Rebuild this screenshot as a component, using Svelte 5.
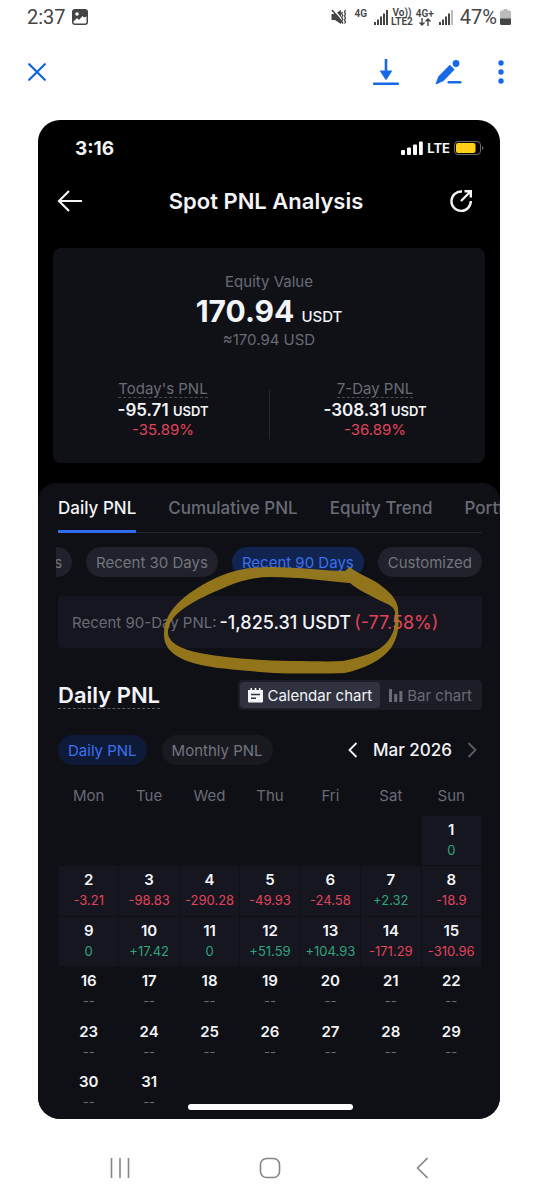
<script>
    const tabs = ['Daily PNL', 'Cumulative PNL', 'Equity Trend', 'Portfolio'];
    const ranges = ['Recent 7 Days', 'Recent 30 Days', 'Recent 90 Days', 'Customized'];
    const weekdays = ['Mon', 'Tue', 'Wed', 'Thu', 'Fri', 'Sat', 'Sun'];
    const results = ['0', '-3.21', '-98.83', '-290.28', '-49.93', '-24.58', '+2.32', '-18.9',
        '0', '+17.42', '0', '+51.59', '+104.93', '-171.29', '-310.96'];

    let activeTab = 'Daily PNL';
    let activeRange = 'Recent 90 Days';
    let chart = 'calendar';
    let period = 'daily';

    // March 2026 starts on a Sunday
    const offset = 6;
    const daysInMonth = 31;
    const weeks = [];
    for (let start = 0; start < offset + daysInMonth; start += 7) {
        const week = [];
        for (let i = start; i < start + 7; i++) {
            const day = i - offset + 1;
            week.push(day < 1 || day > daysInMonth ? null : { day, pnl: results[day - 1] });
        }
        weeks.push(week);
    }

    function tone(pnl) {
        if (!pnl) return 'none';
        return pnl.startsWith('-') ? 'loss' : 'gain';
    }
</script>

<div class="viewer">
    <div class="phone-status">
        <span class="clock">2:37</span>
        <svg width="16" height="16" viewBox="0 0 16 16">
            <rect x="0" y="0" width="16" height="16" rx="3" fill="#444" />
            <circle cx="5" cy="5" r="1.8" fill="#fff" />
            <path d="M1.500 12.500 5 9l2 2 3.500-4 1.500 1.500 2.500-1V13a1.500 1.500 0 0 1-1.500 1.500H3A1.500 1.500 0 0 1 1.500 13z" fill="#fff" />
        </svg>
        <span class="spacer"></span>
        <svg width="16" height="16" viewBox="0 0 16 16">
            <path d="M0.500 5h3.500L10 1v14L4 11H0.500z" fill="#444" />
            <path d="M2.500 0.500l11 13" stroke="#fff" stroke-width="1.400" />
            <path d="M1 1l11 13.500" stroke="#444" stroke-width="1.600" />
            <path d="M11.500 3l-0.800 1.500 1 2-1 2 1 2-1 2M14.500 1l-1 2 1 2-1 2 1 2-1 2 1 2-1 1.500" stroke="#444" stroke-width="1.300" fill="none" />
        </svg>
        <span class="net">4G</span>
        <svg class="bars" width="14" height="15" viewBox="0 0 14 15" fill="#444">
            <path d="M0 12h2v3H0zM3 9.500h2V15H3zM6 6.500h2V15H6zM9 3.500h2V15H9zM12 0h2v15h-2z" />
        </svg>
        <span class="net two">Vo))<br />LTE2</span>
        <span class="net two plus">4G+
            <svg width="12" height="8" viewBox="0 0 12 8" fill="none" stroke="#444" stroke-width="1.400">
                <path d="M3 0v7M0.500 4.500 3 7l2.500-2.500M9 8V1M6.500 3.500 9 1l2.500 2.500" />
            </svg>
        </span>
        <svg class="bars" width="14" height="15" viewBox="0 0 14 15" fill="#444">
            <path d="M0 12h2v3H0zM3 9.500h2V15H3zM6 6.500h2V15H6zM9 3.500h2V15H9z" />
            <path d="M12 0h2v15h-2z" fill="#bbb" />
        </svg>
        <span class="clock">47%</span>
        <svg width="11" height="16" viewBox="0 0 11 16">
            <path d="M3.500 0h4v1.500H9.500A1.500 1.500 0 0 1 11 3v7H0V3a1.500 1.500 0 0 1 1.500-1.500h2z" fill="#bbb" />
            <path d="M0 9.500h11v5a1.500 1.500 0 0 1-1.500 1.500h-8A1.500 1.500 0 0 1 0 14.500z" fill="#444" />
        </svg>
    </div>

    <div class="toolbar">
        <button aria-label="Close">
            <svg width="18" height="18" viewBox="0 0 18 18" fill="none" stroke="#1263dc" stroke-width="2.200" stroke-linecap="round">
                <path d="M1.200 1.200l15.600 15.600M16.800 1.200 1.200 16.800" />
            </svg>
        </button>
        <span class="spacer"></span>
        <button aria-label="Download">
            <svg width="26" height="28" viewBox="0 0 26 28" fill="#1768e6">
                <path d="M11.700 1h2.600v11.500h4.200q.8.200.3 1L13.600 21.500q-.6.600-1.200 0L7.200 13.500q-.5-.8.300-1h4.200z" />
                <rect x="0" y="24.500" width="26" height="2.600" rx="1" />
            </svg>
        </button>
        <button aria-label="Edit">
            <svg width="27" height="28" viewBox="0.500 0 27 28" fill="#1768e6">
                <circle cx="21.500" cy="5.500" r="3.400" />
                <path d="M15.300 6.800l4.800 4.800L9 23 2 26.200Q1 26.400 1.200 25.400L3.800 18.500z" />
                <rect x="13" y="23" width="14" height="2.600" rx="1.300" />
            </svg>
        </button>
        <button aria-label="More">
            <svg width="6" height="26" viewBox="0 0 6 26" fill="#1768e6">
                <circle cx="3" cy="4" r="2.700" />
                <circle cx="3" cy="13" r="2.700" />
                <circle cx="3" cy="22" r="2.700" />
            </svg>
        </button>
    </div>

    <main class="shot">
        <div class="ios-status">
            <span class="ios-time">3:16</span>
            <span class="spacer"></span>
            <svg width="22" height="14" viewBox="0 0 22 14" fill="#fff">
                <rect x="0" y="9" width="4" height="5" rx="1" />
                <rect x="6" y="6.500" width="4" height="7.500" rx="1" />
                <rect x="12" y="3.500" width="4" height="10.500" rx="1" />
                <rect x="18" y="0.500" width="3.800" height="13.500" rx="1" />
            </svg>
            <span class="lte">LTE</span>
            <svg width="30" height="14" viewBox="0 0 30 14">
                <rect x="0.500" y="0.500" width="26" height="13" rx="3.500" fill="none" stroke="#6d6a5c" />
                <rect x="2" y="2" width="19.500" height="10" rx="2" fill="#fdd017" />
                <path d="M28 5v4q1.500-.7 1.500-2T28 5z" fill="#666" />
            </svg>
        </div>

        <header>
            <button aria-label="Back">
                <svg width="26" height="22" viewBox="0 0 26 22" fill="none" stroke="#f3f4f8" stroke-width="2.200">
                    <path d="M12 1 2 11l10 10M2 11h23" />
                </svg>
            </button>
            <h1>Spot PNL Analysis</h1>
            <button aria-label="Share">
                <svg width="24" height="24" viewBox="0 0 24 24" fill="none" stroke="#f3f4f8" stroke-width="2.400">
                    <path d="M13 2.500A9.700 9.700 0 1 0 21.800 12" />
                    <path d="M12 12 21.500 2.500M15.500 2.300h6.300v6.300" />
                </svg>
            </button>
        </header>

        <section class="equity">
            <p class="muted">Equity Value</p>
            <p class="total">170.94 <small>USDT</small></p>
            <p class="muted">≈170.94 USD</p>
            <div class="split">
                <div>
                    <span class="muted hint">Today's PNL</span>
                    <strong>-95.71 <small>USDT</small></strong>
                    <span class="loss">-35.89%</span>
                </div>
                <div>
                    <span class="muted hint">7-Day PNL</span>
                    <strong>-308.31 <small>USDT</small></strong>
                    <span class="loss">-36.89%</span>
                </div>
            </div>
        </section>

        <section class="panel">
            <nav class="tabs">
                {#each tabs as tab}
                    <button class:active={tab === activeTab} on:click={() => (activeTab = tab)}>{tab}</button>
                {/each}
            </nav>

            <div class="marked">
                <div class="ranges">
                    {#each ranges as range}
                        <button class="chip" class:active={range === activeRange} on:click={() => (activeRange = range)}>{range}</button>
                    {/each}
                </div>
                <p class="summary">
                    <span>Recent 90-Day PNL:</span>
                    <b>-1,825.31 USDT</b>
                    <em>(-77.58%)</em>
                </p>
                <!-- highlighter loop drawn over the figures -->
                <svg class="loop" width="236" height="110" viewBox="164 565 236 110">
                    <path
                        fill="#a1801c"
                        fill-rule="evenodd"
                        d="M164 632C165 608 190 590 218 577C236 569 252 567 270 567C300 567 325 571 345 571L350 567C358 575 372 577 384 588C392 594 397 601 398 608C399 622 400 634 391 648C382 660 364 669 345 673C318 674 276 674 250 671C225 669 205 667 190 662C173 656 163 648 164 632Z
                        M168 631C167 642 180 649 200 653C225 658 255 660 290 661C310 661 328 662 343 661C362 657 380 652 388 641C396 630 395 624 395 612C393 604 385 604 375 598C366 593 358 590 350 583C325 581 300 577 270 577C255 577 240 581 228 586C205 596 169 610 168 631Z"
                    />
                </svg>
            </div>

            <div class="row chart-head">
                <h2>Daily PNL</h2>
                <div class="toggle">
                    <button class:active={chart === 'calendar'} on:click={() => (chart = 'calendar')}>
                        <svg width="15" height="15" viewBox="0 0 15 15">
                            <path d="M0 2h2.500V0H4v2h2.700V0h1.600v2H11V0h1.500v2H15v11.500a1 1 0 0 1-1 1H1a1 1 0 0 1-1-1z" fill="currentColor" />
                            <path d="M3 6.500h9M3 10.300h5" stroke="#30333f" stroke-width="1.500" />
                        </svg>
                        Calendar chart
                    </button>
                    <button class:active={chart === 'bar'} on:click={() => (chart = 'bar')}>
                        <svg width="15" height="15" viewBox="0 0 15 15" fill="currentColor">
                            <path d="M1 1h3v13H1zM6.200 6h3v8h-3zM11.400 3h3v11h-3z" />
                        </svg>
                        Bar chart
                    </button>
                </div>
            </div>

            <div class="row filters">
                <button class="chip" class:active={period === 'daily'} on:click={() => (period = 'daily')}>Daily PNL</button>
                <button class="chip" class:active={period === 'monthly'} on:click={() => (period = 'monthly')}>Monthly PNL</button>
                <span class="spacer"></span>
                <button class="step" aria-label="Previous month">
                    <svg width="10" height="16" viewBox="0 0 10 16" fill="none" stroke="#f3f4f8" stroke-width="1.800"><path d="M8.500 1 1.500 8l7 7" /></svg>
                </button>
                <span class="month">Mar 2026</span>
                <button class="step" aria-label="Next month">
                    <svg width="10" height="16" viewBox="0 0 10 16" fill="none" stroke="#5c5e68" stroke-width="1.800"><path d="M1.500 1l7 7-7 7" /></svg>
                </button>
            </div>

            <table>
                <thead>
                    <tr>
                        {#each weekdays as name}
                            <th>{name}</th>
                        {/each}
                    </tr>
                </thead>
                <tbody>
                    {#each weeks as week}
                        <tr>
                            {#each week as cell}
                                {#if cell}
                                    <td class:filled={cell.pnl}>
                                        <b>{cell.day}</b>
                                        <span class={tone(cell.pnl)}>{cell.pnl || '--'}</span>
                                    </td>
                                {:else}
                                    <td></td>
                                {/if}
                            {/each}
                        </tr>
                    {/each}
                </tbody>
            </table>
            <div class="home-bar"></div>
        </section>
    </main>

    <nav class="phone-nav">
        <button aria-label="Recent apps">
            <svg width="20" height="20" viewBox="0 0 20 20" stroke="#858585" stroke-width="1.600"><path d="M1.500 0v20M10 0v20M18.500 0v20" /></svg>
        </button>
        <button aria-label="Home">
            <svg width="22" height="22" viewBox="0 0 22 22" fill="none" stroke="#858585" stroke-width="1.600"><rect x="1.500" y="1.500" width="19" height="19" rx="6" /></svg>
        </button>
        <button aria-label="Back">
            <svg width="18" height="22" viewBox="-6 0 18 22" fill="none" stroke="#858585" stroke-width="1.600"><path d="M11.500 1 1.500 11l10 10" /></svg>
        </button>
    </nav>
</div>

<style>
    :global(body) {
        margin: 0;
        background: #fefefe;
    }

    .viewer {
        font-family: Inter, "Liberation Sans", sans-serif;
        color: #f3f4f8;
    }

    button {
        font: inherit;
        color: inherit;
        background: none;
        border: 0;
        padding: 0;
        cursor: pointer;
        white-space: nowrap;
    }

    svg {
        display: block;
        flex: none;
    }

    p, h1, h2 {
        margin: 0;
    }

    .spacer {
        flex: 1;
    }

    .phone-status {
        display: flex;
        align-items: center;
        height: 34px;
        padding: 0 27px;
        color: #444;
        font-family: Roboto, sans-serif;
    }

    .clock {
        font-size: 20px;
        margin-right: 6px;
    }

    .net {
        font-size: 10px;
        line-height: 9px;
        font-weight: 600;
        margin: 0 7px 8px 8px;
    }

    .two {
        margin: 0 2px 0 1px;
        text-align: center;
    }

    .plus {
        margin-right: 5px;
    }

    .plus svg {
        margin: 0 auto;
    }

    .bars {
        margin: 0 2px 0 0;
    }

    .bars + .clock {
        margin: 0 3px 0 5px;
    }

    .toolbar {
        display: flex;
        align-items: center;
        gap: 36px;
        height: 76px;
        padding: 0 34px 10px 28px;
    }

    .shot {
        margin: 0 38px;
        background: #000;
        border-radius: 22px;
        overflow: hidden;
    }

    .ios-status {
        display: flex;
        align-items: center;
        gap: 4px;
        height: 56px;
        padding: 0 16px 0 37px;
    }

    .ios-time {
        font-size: 19px;
        font-weight: 700;
    }

    .lte {
        font-size: 13px;
        font-weight: 700;
    }

    header {
        display: flex;
        align-items: center;
        justify-content: space-between;
        height: 50px;
        padding: 0 27px 0 19px;
    }

    h1 {
        font-size: 22px;
        font-weight: 600;
    }

    .equity {
        margin: 22px 15px 20px;
        padding: 24px 0;
        background: #101116;
        border-radius: 8px;
        text-align: center;
        font-size: 15px;
        line-height: 20px;
    }

    .muted {
        color: #696b75;
    }

    .total {
        font-size: 30px;
        line-height: 38px;
        font-weight: 700;
    }

    .total small {
        font-size: 15px;
        line-height: 20px;
        font-weight: 500;
    }

    .split {
        display: flex;
        margin: 30px 4px 0;
    }

    .split div {
        flex: 1;
        display: flex;
        flex-direction: column;
        align-items: center;
    }

    .split div + div {
        background: linear-gradient(#262730, #262730) 0 10px / 1px 50px no-repeat;
    }

    .hint {
        line-height: 17px;
        border-bottom: 1px dashed #4a4c55;
    }

    .split strong {
        font-size: 17px;
        line-height: 24px;
        font-weight: 600;
    }

    .split small {
        font-size: 13px;
        line-height: 16px;
    }

    .split .loss {
        line-height: 16px;
        padding-bottom: 1px;
    }

    .loss {
        color: #e3435a;
    }

    .gain {
        color: #2fa57a;
    }

    .none {
        color: #696b75;
    }

    .panel {
        background: #0f1015;
        border-radius: 18px 18px 0 0;
        padding: 0 18px 9px 20px;
        overflow: hidden;
    }

    .tabs {
        display: flex;
        gap: 32px;
        height: 49px;
        border-bottom: 1px solid #24252d;
        font-size: 17px;
        font-weight: 500;
        color: #696b75;
    }

    .tabs button {
        height: 50px;
        padding-top: 3px;
        border-bottom: 3px solid transparent;
    }

    .tabs .active {
        color: #f3f4f8;
        border-color: #2f6bea;
    }

    .marked {
        position: relative;
    }

    .ranges {
        display: flex;
        justify-content: flex-end;
        gap: 14px;
        margin: 14px 0 19px -2px;
        overflow: hidden;
    }

    .chip {
        flex: none;
        height: 30px;
        padding: 0 10px;
        border-radius: 15px;
        background: #20212a;
        color: #73757f;
        font-size: 15px;
    }

    .chip.active {
        background: #10244f;
        color: #3b70f0;
    }

    .summary {
        display: flex;
        align-items: center;
        height: 52px;
        padding: 0 14px;
        background: #151620;
        border-radius: 4px;
        font-size: 15px;
        white-space: nowrap;
    }

    .summary span {
        color: #696b75;
        margin-right: 3px;
    }

    .summary b,
    .summary em {
        font-size: 18px;
        font-weight: 500;
        font-style: normal;
    }

    .summary em {
        color: #e3435a;
        font-weight: 400;
        margin-left: 3px;
    }

    .loop {
        position: absolute;
        left: 106px;
        top: 18px;
        opacity: 0.9;
        pointer-events: none;
    }

    .row {
        display: flex;
        align-items: center;
    }

    .chart-head {
        justify-content: space-between;
        margin-top: 32px;
    }

    h2 {
        font-size: 22px;
        line-height: 26px;
        font-weight: 600;
        border-bottom: 1px dashed #5a5c66;
    }

    .toggle {
        display: flex;
        background: #1c1d26;
        border-radius: 4px;
        padding: 2px;
    }

    .toggle button {
        display: flex;
        align-items: center;
        gap: 4px;
        height: 26px;
        padding: 0 8px;
        border-radius: 4px;
        font-size: 15px;
        color: #696b75;
    }

    .toggle .active {
        background: #30333f;
        color: #f3f4f8;
    }

    .filters {
        gap: 15px;
        margin-top: 25px;
    }

    .filters .chip {
        background: #191a20;
    }

    .filters .active {
        background: #0f1a38;
    }

    .month {
        font-size: 17px;
        font-weight: 500;
    }

    .filters .step:last-child {
        margin-right: 5px;
    }

    table {
        width: 100%;
        table-layout: fixed;
        border-collapse: collapse;
        margin-top: 10px;
    }

    th {
        height: 40px;
        padding: 0;
        font-size: 15px;
        font-weight: 400;
        color: #696b75;
    }

    td {
        height: 50px;
        box-sizing: border-box;
        padding: 0;
        text-align: center;
        vertical-align: top;
    }

    tr:nth-child(even) td {
        height: 51px;
    }

    .filled {
        background: #151620;
        border: 1px solid #101117;
    }

    td b {
        display: block;
        font-size: 15px;
        line-height: 20px;
        padding-top: 4px;
        font-weight: 600;
    }

    td span {
        display: block;
        font-size: 13px;
        line-height: 20px;
    }

    .home-bar {
        width: 165px;
        height: 6px;
        margin: -15px auto 0;
        border-radius: 3px;
        background: #fff;
    }

    .phone-nav {
        display: flex;
        justify-content: space-between;
        align-items: center;
        height: 62px;
        padding: 0 110px;
        margin-top: 18px;
    }
</style>
